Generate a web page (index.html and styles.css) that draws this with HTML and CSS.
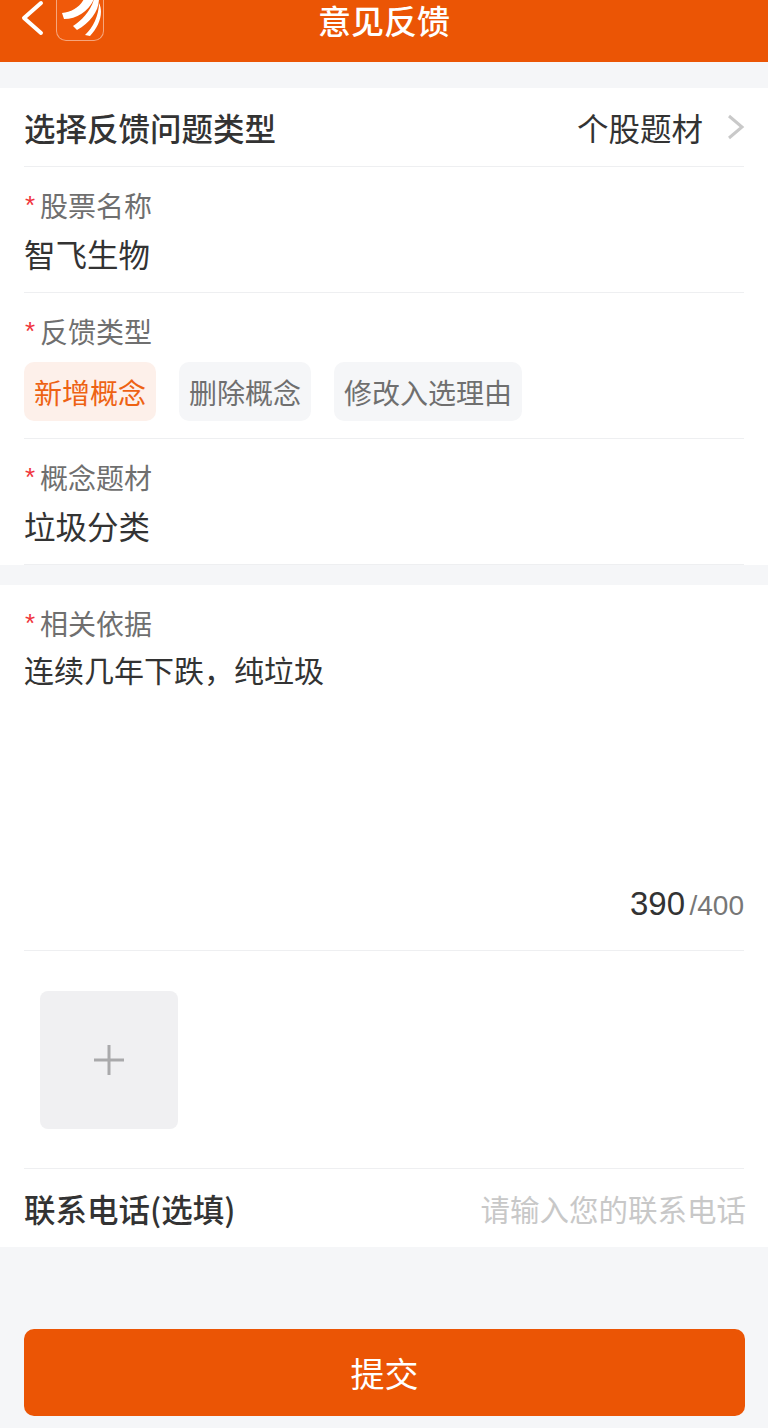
FILE: index.html
```html
<!DOCTYPE html>
<html lang="zh">
<head>
<meta charset="utf-8">
<title>意见反馈</title>
<link rel="stylesheet" href="styles.css">
</head>
<body>
<header class="nav">
  <div class="nav-left">
    <svg class="back" width="24" height="40" viewBox="0 0 24 40"><path d="M21 4 L4 19 L21 34" fill="none" stroke="#fff" stroke-width="4" stroke-linecap="round" stroke-linejoin="round" transform="translate(0 -1)"/></svg>
    <div class="logo">
      <svg width="46" height="42" viewBox="0 0 46 42">
        <path d="M5 14 C14 13 22 9 27 0 L37 0 C32 12 20 20 7 20 Z" fill="#fff"/>
        <path d="M16 27 C24 22 34 12 37 0 L42 0 C42 12 33 24 20 31 Z" fill="#fff"/>
        <path d="M28 36 C36 29 42 16 42 4 C47 14 42 28 33 37 Z" fill="#fff"/>
      </svg>
    </div>
  </div>
  <h1 class="nav-title">意见反馈</h1>
</header>

<section class="card card-first">
  <div class="row row-select">
    <span class="row-title">选择反馈问题类型</span>
    <span class="row-value">个股题材
      <svg class="chev" width="18" height="26" viewBox="0 0 18 26"><path d="M2 2 L15 13 L2 24" fill="none" stroke="#c9c9c9" stroke-width="3"/></svg>
    </span>
  </div>
  <div class="field field-name">
    <div class="label"><i class="star">*</i>股票名称</div>
    <div class="value">智飞生物</div>
  </div>
  <div class="field field-type">
    <div class="label"><i class="star">*</i>反馈类型</div>
    <div class="chips">
      <span class="chip chip-on">新增概念</span>
      <span class="chip">删除概念</span>
      <span class="chip">修改入选理由</span>
    </div>
  </div>
  <div class="field field-topic">
    <div class="label"><i class="star">*</i>概念题材</div>
    <div class="value">垃圾分类</div>
  </div>
</section>

<section class="card card-second">
  <div class="field field-basis">
    <div class="label"><i class="star">*</i>相关依据</div>
    <div class="value value-basis">连续几年下跌，纯垃圾</div>
    <div class="count"><b>390</b> <span>/400</span></div>
  </div>
  <div class="upload-row">
    <div class="upload">
      <svg width="32" height="32" viewBox="0 0 32 32"><path d="M16 1 V31 M1 16 H31" stroke="#a9a9ab" stroke-width="3"/></svg>
    </div>
  </div>
  <div class="phone">
    <span class="row-title">联系电话(选填)</span>
    <span class="placeholder">请输入您的联系电话</span>
  </div>
</section>

<div class="actions"><button class="submit">提交</button></div>
</body>
</html>
```

FILE: styles.css
```css
* { box-sizing: border-box; }
html, body { margin: 0; padding: 0; }
body {
  width: 768px;
  height: 1428px;
  overflow: hidden;
  background: #f5f6f8;
  color: #333;
  font-family: "Noto Sans CJK SC", "Liberation Sans", sans-serif;
}
.nav {
  position: relative;
  height: 62px;
  background: #eb5505;
  display: flex;
  align-items: flex-start;
  justify-content: center;
}
.nav-left {
  position: absolute;
  left: 20px;
  top: 0;
  display: flex;
  align-items: flex-start;
  gap: 12px;
}
.logo {
  width: 48px;
  height: 42px;
  margin-top: -1px;
  background: #f0590a;
  border: 1px solid #f6a67c;
  border-top: 0;
  border-radius: 0 0 10px 10px;
  overflow: hidden;
}
.logo svg { display: block; }
.nav-title {
  margin: 0;
  font-size: 33px;
  line-height: 40px;
  font-weight: 500;
  color: #fff;
}
.card { background: #fff; padding: 0 24px; }
.card-first { margin-top: 26px; height: 477px; }
.card-second { margin-top: 20px; height: 662px; }
.row-select {
  height: 79px;
  display: flex;
  align-items: center;
  justify-content: space-between;
  border-bottom: 1px solid #eeeff1;
}
.row-title { font-size: 31.5px; font-weight: 500; color: #333; line-height: 44px; }
.row-value {
  display: flex;
  align-items: center;
  gap: 24px;
  font-size: 31.5px;
  color: #333;
}
.chev { margin-right: -1px; }
.field { border-bottom: 1px solid #eeeff1; padding-top: 18px; }
.field-name { height: 126px; }
.field-type { height: 146px; }
.field-topic { height: 126px; }
.label {
  display: flex;
  font-size: 28px;
  line-height: 40px;
  color: #6f6f6f;
}
.star {
  width: 16px;
  font-style: normal;
  font-family: "Liberation Sans", sans-serif;
  font-size: 26px;
  color: #f0343c;
  padding-left: 1px;
}
.value { font-size: 31.5px; line-height: 46px; margin-top: 5px; color: #333; }
.chips { display: flex; gap: 23px; margin-top: 11px; }
.chip {
  height: 59px;
  padding: 0 10px;
  display: flex;
  align-items: center;
  border-radius: 10px;
  background: #f5f6f8;
  font-size: 28px;
  color: #6f6f6f;
}
.chip-on { background: #fdf0ea; color: #ee6213; }
.field-basis { height: 366px; padding-top: 18px; display: flex; flex-direction: column; }
.value-basis { font-size: 28.5px; line-height: 44px; margin-top: 4px; flex: 1; font-size: 30px; }
.count {
  text-align: right;
  font-family: "Liberation Sans", sans-serif;
  line-height: 40px;
  margin-bottom: 20px;
}
.count b { font-weight: 400; font-size: 33px; color: #333; }
.count span { font-size: 28px; color: #777; }
.upload-row { height: 218px; padding: 40px 0 0 16px; border-bottom: 1px solid #eeeff1; }
.upload {
  width: 138px;
  height: 138px;
  background: #f0f0f2;
  border-radius: 8px;
  display: flex;
  align-items: center;
  justify-content: center;
}
.phone {
  height: 78px;
  display: flex;
  align-items: center;
  justify-content: space-between;
}
.placeholder { font-size: 29.5px; color: #c8c8c8; margin-right: -2px; }
.actions { padding: 82px 23px 0 24px; }
.submit {
  display: block;
  width: 100%;
  height: 87px;
  border: 0;
  border-radius: 10px;
  background: #eb5505;
  color: #fff;
  font-family: inherit;
  font-size: 34px;
  padding: 0;
}
```
